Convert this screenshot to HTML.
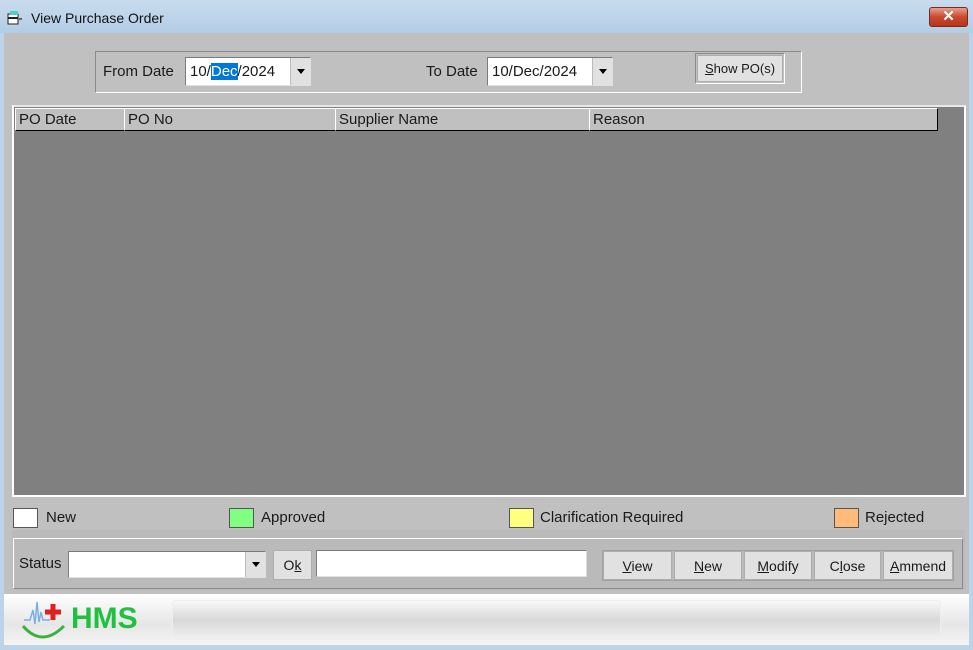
<!DOCTYPE html>
<html><head><style>
*{margin:0;padding:0;box-sizing:border-box}
body{width:973px;height:650px;overflow:hidden;background:#bcd3e8;font-family:"Liberation Sans",sans-serif;font-size:15px;color:#1a1a1a;position:relative}
.a{position:absolute}
.tb{left:0;top:0;width:973px;height:33px;background:linear-gradient(#c9dcee,#b3cde6)}
.body{left:4px;top:33px;width:965px;height:561px;background:#c0c0c0}
.foot{left:4px;top:594px;width:965px;height:51px;background:linear-gradient(#ffffff,#e6e6e6 60%,#f4f4f4)}
.inset{border:1px solid #fff;border-top-color:#8a8a8a;border-left-color:#8a8a8a}
.btn{background:#e1e1e1;border:1px solid #adadad;text-align:center;font-size:14px;line-height:28px}
.white{background:#fff;border:1px solid #7a7a7a;border-right-color:#e0e0e0;border-bottom-color:#e0e0e0}
.dd{background:#e1e1e1;border-left:1px solid #bbb;width:20px;display:flex;align-items:center;justify-content:center}
.dd:after{content:"";border-left:4px solid transparent;border-right:4px solid transparent;border-top:5px solid #000}
.hd{top:108px;height:23px;background:#c0c0c0;border-right:1px solid #000;border-bottom:1px solid #000;border-left:1px solid #fff;border-top:1px solid #fff;padding-left:3px;line-height:21px}
.sw{width:25px;height:20px;border:1px solid #555}
u{text-decoration:underline}
</style></head><body>
<div class="a tb"></div>
<svg class="a" style="left:7px;top:10px" width="16" height="16"><rect x="1" y="4" width="10" height="10" fill="#fff" stroke="#222"/><rect x="3" y="1" width="8" height="4" fill="#5cc"/><rect x="1" y="7" width="10" height="2" fill="#222"/><rect x="12" y="8" width="3" height="2" fill="#666"/></svg>
<div class="a" style="left:31px;top:10px;font-size:14px;color:#111">View Purchase Order</div>
<div class="a" style="left:929px;top:7px;width:39px;height:20px;border-radius:3px;background:linear-gradient(#e8a08f,#c9492f 50%,#b8341c);border:1px solid #7a2a1c;color:#fff;font-weight:bold;text-align:center;line-height:17px;font-size:15px">✕</div>
<div class="a body"></div>
<div class="a inset" style="left:95px;top:51px;width:707px;height:42px"></div>
<div class="a" style="left:103px;top:63px">From Date</div>
<div class="a white" style="left:185px;top:57px;width:126px;height:29px;display:flex"><div style="flex:1;padding:5px 4px;">10/<span style="background:#0078d7;color:#fff">Dec</span>/2024</div><div class="dd"></div></div>
<div class="a" style="left:426px;top:63px">To Date</div>
<div class="a white" style="left:487px;top:57px;width:126px;height:29px;display:flex"><div style="flex:1;padding:5px 4px;">10/Dec/2024</div><div class="dd"></div></div>
<div class="a inset" style="left:695px;top:53px;width:90px;height:31px"></div>
<div class="a btn" style="left:697px;top:55px;width:86px;height:27px;line-height:26px;font-size:13px"><u>S</u>how PO(s)</div>
<div class="a" style="left:12px;top:105px;width:954px;height:392px;background:#808080;border:2px solid #fff;border-top-color:#e8e8e8"></div>
<div class="a hd" style="left:15px;width:110px">PO Date</div>
<div class="a hd" style="left:124px;width:212px">PO No</div>
<div class="a hd" style="left:335px;width:255px">Supplier Name</div>
<div class="a hd" style="left:589px;width:349px">Reason</div>
<div class="a sw" style="left:13px;top:508px;background:#fff"></div><div class="a" style="left:46px;top:509px">New</div>
<div class="a sw" style="left:229px;top:508px;background:#80ff80"></div><div class="a" style="left:261px;top:509px">Approved</div>
<div class="a sw" style="left:509px;top:508px;background:#ffff80"></div><div class="a" style="left:540px;top:509px">Clarification Required</div>
<div class="a sw" style="left:834px;top:508px;background:#ffbb77"></div><div class="a" style="left:865px;top:509px">Rejected</div>
<div class="a" style="left:12px;top:530px;width:953px;height:60px;background:#bababa"></div>
<div class="a inset" style="left:13px;top:538px;width:950px;height:51px;border-color:#fff #8a8a8a #8a8a8a #fff"></div>
<div class="a" style="left:19px;top:555px">Status</div>
<div class="a white" style="left:68px;top:551px;width:198px;height:27px;display:flex"><div style="flex:1"></div><div class="dd"></div></div>
<div class="a btn" style="left:273px;top:550px;width:39px;height:30px">O<u>k</u></div>
<div class="a white" style="left:316px;top:550px;width:271px;height:27px"></div>
<div class="a" style="left:602px;top:550px;width:352px;height:31px;border:1px solid #a0a0a0"></div>
<div class="a btn" style="left:603px;top:551px;width:69px;height:29px"><u>V</u>iew</div>
<div class="a btn" style="left:674px;top:551px;width:68px;height:29px"><u>N</u>ew</div>
<div class="a btn" style="left:744px;top:551px;width:68px;height:29px"><u>M</u>odify</div>
<div class="a btn" style="left:814px;top:551px;width:67px;height:29px">C<u>l</u>ose</div>
<div class="a btn" style="left:883px;top:551px;width:70px;height:29px"><u>A</u>mmend</div>
<div class="a foot"></div>
<div class="a" style="left:172px;top:600px;width:769px;height:40px;border-radius:3px;background:linear-gradient(#f8f8f8,#d8d8d8 50%,#f0f0f0);border:1px solid #eee"></div>
<svg class="a" style="left:20px;top:598px" width="50" height="42"><path d="M4 22 L10 22 L13 12 L15 26 L17 4 L19 24 L21 14 L23 22 L30 22" stroke="#7ab0e0" stroke-width="1.5" fill="none"/><path d="M3 28 Q22 50 44 28" stroke="#3cb043" stroke-width="3" fill="none"/><path d="M33 6 V22 M25 14 H41" stroke="#e02020" stroke-width="5"/></svg>
<div class="a" style="left:71px;top:602px;font-size:30px;font-weight:bold;color:#20c040">HMS</div>
</body></html>
